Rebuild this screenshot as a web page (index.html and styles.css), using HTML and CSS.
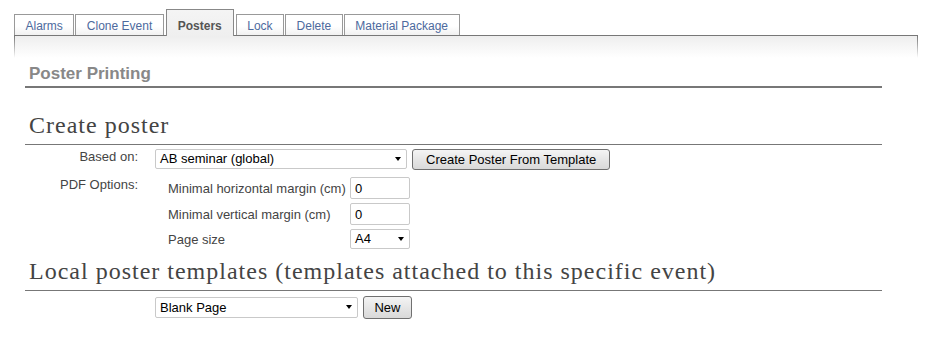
FILE: index.html
```html
<!DOCTYPE html>
<html lang="en">
<head>
    <meta charset="UTF-8">
    <title>Poster Printing</title>
    <link rel="stylesheet" href="styles.css">
</head>
<body>
    <div class="tabs">
        <a class="tab" href="#">Alarms</a>
        <a class="tab" href="#">Clone Event</a>
        <a class="tab active" href="#">Posters</a>
        <a class="tab" href="#">Lock</a>
        <a class="tab" href="#">Delete</a>
        <a class="tab" href="#">Material Package</a>
    </div>
    <div class="panel">
        <div class="page-title">Poster Printing</div>

        <h2 class="section">Create poster</h2>
        <div class="form">
            <div class="row">
                <div class="label">Based on:</div>
                <div class="field">
                    <span class="select wide"><span class="select-text">AB seminar (global)</span></span>
                    <button class="btn">Create Poster From Template</button>
                </div>
            </div>
            <div class="row options">
                <div class="label">PDF Options:</div>
                <div class="sub">
                    <div class="sub-label">Minimal horizontal margin (cm)</div>
                    <input class="text" type="text" value="0">
                    <div class="sub-label">Minimal vertical margin (cm)</div>
                    <input class="text" type="text" value="0">
                    <div class="sub-label">Page size</div>
                    <span class="select small"><span class="select-text">A4</span></span>
                </div>
            </div>
        </div>

        <h2 class="section local">Local poster templates (templates attached to this specific event)</h2>
        <div class="form local-form">
            <div class="row">
                <div class="label"></div>
                <div class="field center">
                    <span class="select medium"><span class="select-text">Blank Page</span></span>
                    <button class="btn new">New</button>
                </div>
            </div>
        </div>
    </div>
</body>
</html>
```

FILE: styles.css
```css
body {
    margin: 0;
    font-family: "Liberation Sans", Arial, sans-serif;
    font-size: 13px;
    color: #444;
    background: #fff;
}
.tabs {
    display: flex;
    align-items: flex-end;
    height: 35px;
    padding-left: 14px;
}
.tab {
    display: block;
    margin-right: 1px;
    padding: 3px 10.5px 0;
    line-height: 17px;
    border: 1px solid #999;
    border-bottom: none;
    font-size: 12px;
    color: #4d6a9e;
    text-decoration: none;
    background: linear-gradient(#fff 55%, #f1f1f1);
}
.tab.active {
    position: relative;
    z-index: 1;
    margin: 0 2px -1px 1px;
    padding: 8px 11px 1px;
    border-color: #888;
    font-weight: bold;
    color: #555;
    background: linear-gradient(#f4f4f4, #efefef);
}
.panel {
    margin-left: 14px;
    width: 857px;
    padding: 28px 36px 30px 11px;
    border-top: 1px solid #777;
    background:
        linear-gradient(#777, rgba(119, 119, 119, 0)) left top / 1px 22px no-repeat,
        linear-gradient(#777, rgba(119, 119, 119, 0)) right top / 1px 22px no-repeat,
        linear-gradient(#eeeeee, #fff) left top / 100% 22px no-repeat,
        #fff;
}
.page-title {
    padding: 0 0 2px 4px;
    font-size: 17px;
    line-height: 20px;
    font-weight: bold;
    color: #888;
    border-bottom: 2px solid #777;
}
.section {
    margin: 23px 0 0;
    padding: 0 0 5px 4px;
    font-family: "Liberation Serif", "Times New Roman", serif;
    font-size: 24px;
    line-height: 28px;
    font-weight: normal;
    letter-spacing: 1px;
    color: #444;
    border-bottom: 1px solid #777;
}
.section.local {
    margin-top: 8px;
}
.form {
    padding-top: 4px;
    margin-bottom: 1px;
}
.local-form {
    padding-top: 5px;
}
.row {
    display: grid;
    grid-template-columns: 113px 1fr;
    column-gap: 17px;
}
.row.options {
    margin-top: 7px;
}
.label {
    text-align: right;
    line-height: 13px;
    padding-top: 1px;
    color: #444;
}
.field {
    display: flex;
    align-items: flex-start;
    gap: 5px;
}
.field.center {
    align-items: center;
}
.select {
    position: relative;
    display: block;
    box-sizing: border-box;
    height: 20px;
    padding-left: 4px;
    border: 1px solid #c9c9c9;
    border-radius: 2px;
    background: #fff;
    color: #000;
    line-height: 18px;
}
.select::after {
    content: "";
    position: absolute;
    right: 5px;
    top: 7px;
    border-left: 3.5px solid transparent;
    border-right: 3.5px solid transparent;
    border-top: 4px solid #000;
}
.select.wide {
    width: 252px;
}
.select.medium {
    width: 203px;
    height: 21px;
    line-height: 19px;
}
.select.small {
    width: 60px;
}
.btn {
    box-sizing: border-box;
    height: 21px;
    padding: 0 13px;
    border: 1px solid #707070;
    border-radius: 3px;
    background: linear-gradient(#f4f4f4, #e6e6e6 50%, #d9d9d9);
    font-family: "Liberation Sans", Arial, sans-serif;
    font-size: 13px;
    color: #000;
}
.btn.new {
    width: 49px;
    height: 23px;
    padding: 0;
}
.sub {
    display: grid;
    grid-template-columns: 182px 60px;
    row-gap: 4px;
    align-items: center;
    padding-left: 13px;
}
.sub-label {
    line-height: 15px;
    color: #444;
}
.text {
    box-sizing: border-box;
    width: 60px;
    height: 22px;
    margin: 0;
    padding: 0 4px;
    border: 1px solid #c9c9c9;
    border-radius: 2px;
    font-family: "Liberation Sans", Arial, sans-serif;
    font-size: 13px;
    color: #000;
}
```
